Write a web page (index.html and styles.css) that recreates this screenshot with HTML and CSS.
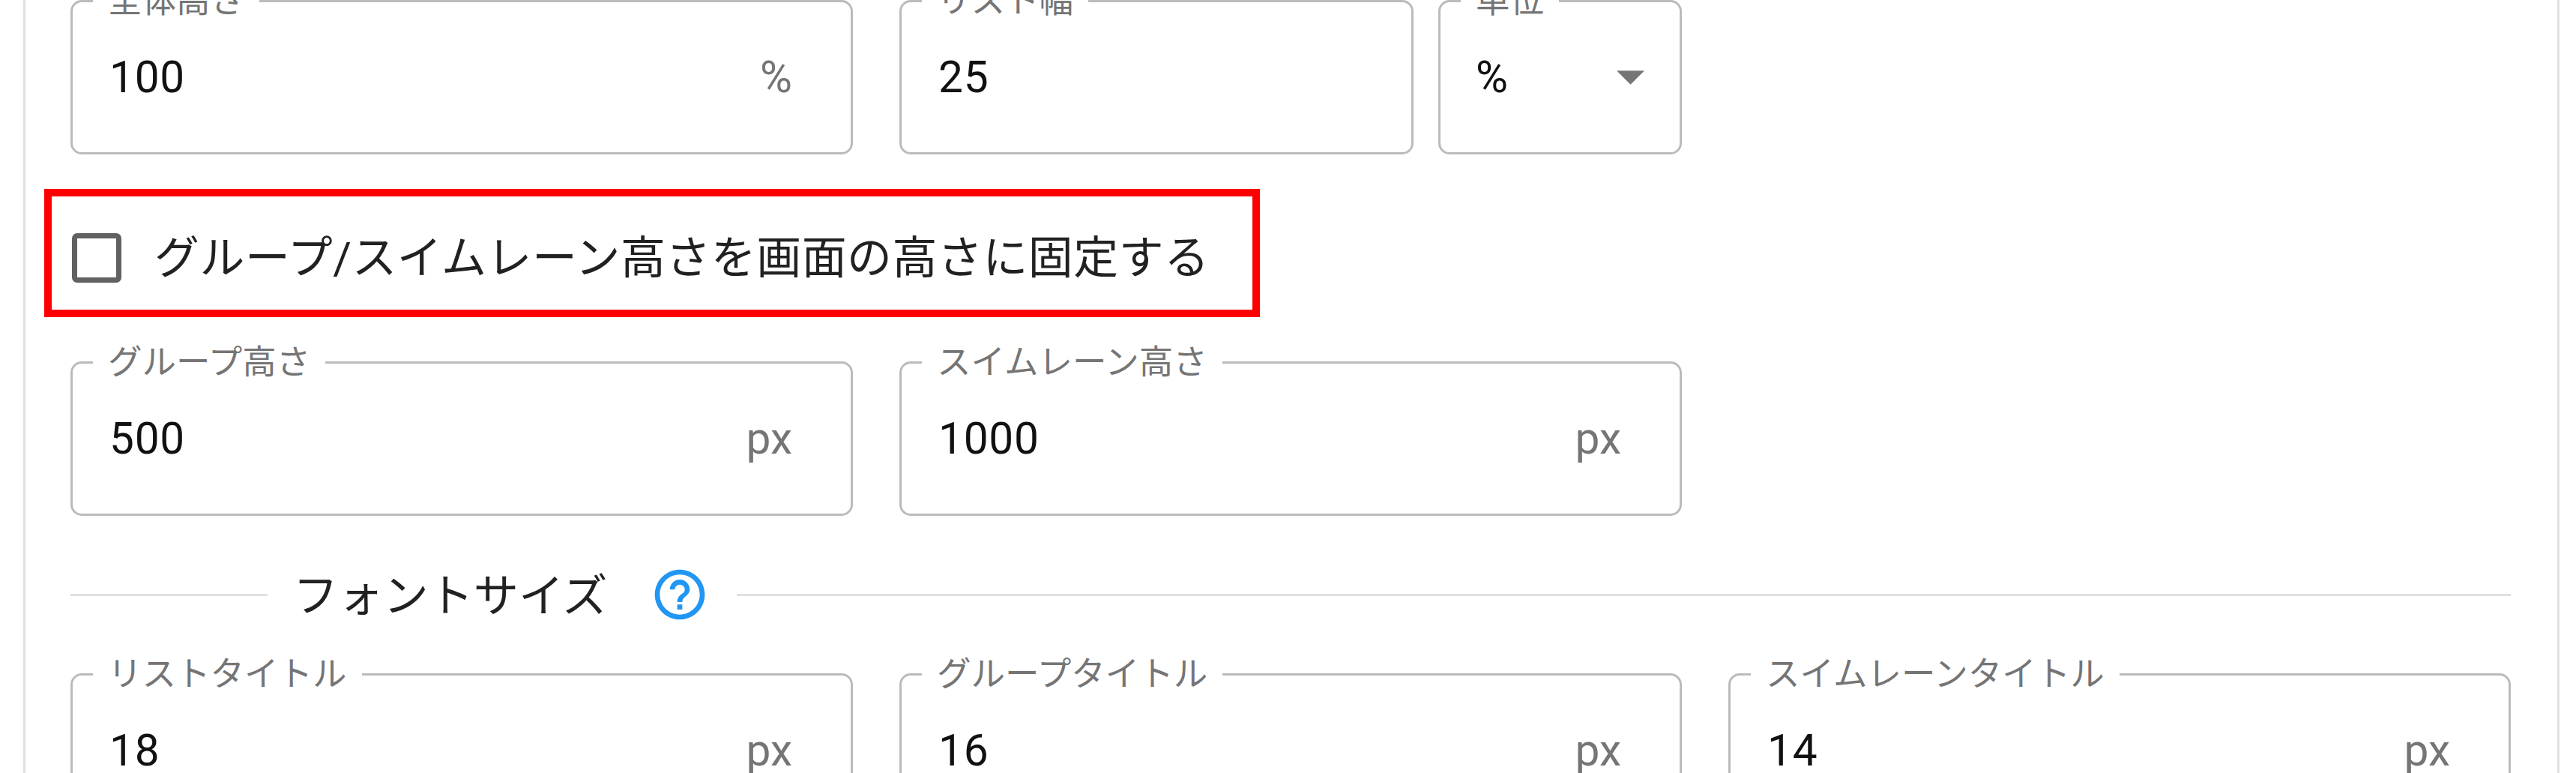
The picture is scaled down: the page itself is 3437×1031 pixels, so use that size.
FILE: index.html
```html
<!DOCTYPE html>
<html lang="ja">
<head>
  <meta charset="UTF-8">
  <title>ボード設定</title>
  <link rel="stylesheet" href="styles.css">
</head>
<body>

  <div class="panel">

    <!-- Board size -->
    <div class="row">
      <div class="field">
        <span class="field-label">全体高さ</span>
        <span class="field-value">100</span>
        <span class="field-unit">%</span>
      </div>
      <div class="field-pair">
        <div class="field field-wide">
          <span class="field-label">リスト幅</span>
          <span class="field-value">25</span>
        </div>
        <div class="field field-select">
          <span class="field-label">単位</span>
          <span class="field-value">%</span>
          <svg class="select-arrow" viewBox="7 10 10 5"><path d="M7 10l5 5 5-5z"/></svg>
        </div>
      </div>
    </div>

    <!-- Highlighted option -->
    <div class="highlight">
      <span class="checkbox"></span>
      <span class="checkbox-text">グループ/スイムレーン高さを画面の高さに固定する</span>
    </div>

    <!-- Group and swimlane heights -->
    <div class="row row-heights">
      <div class="field">
        <span class="field-label">グループ高さ</span>
        <span class="field-value">500</span>
        <span class="field-unit">px</span>
      </div>
      <div class="field">
        <span class="field-label">スイムレーン高さ</span>
        <span class="field-value">1000</span>
        <span class="field-unit">px</span>
      </div>
    </div>

    <!-- Font size section -->
    <div class="section-divider">
      <span class="divider-line divider-short"></span>
      <span class="section-title">フォントサイズ</span>
      <svg class="help-icon" viewBox="0 0 24 24"><path d="M11 18h2v-2h-2v2zm1-16C6.48 2 2 6.48 2 12s4.48 10 10 10 10-4.48 10-10S17.52 2 12 2zm0 18c-4.41 0-8-3.59-8-8s3.59-8 8-8 8 3.59 8 8-3.59 8-8 8zm0-14c-2.21 0-4 1.79-4 4h2c0-1.1.9-2 2-2s2 .9 2 2c0 2-3 1.75-3 5h2c0-2.25 3-2.5 3-5 0-2.21-1.79-4-4-4z"/></svg>
      <span class="divider-line"></span>
    </div>

    <div class="row">
      <div class="field">
        <span class="field-label">リストタイトル</span>
        <span class="field-value">18</span>
        <span class="field-unit">px</span>
      </div>
      <div class="field">
        <span class="field-label">グループタイトル</span>
        <span class="field-value">16</span>
        <span class="field-unit">px</span>
      </div>
      <div class="field">
        <span class="field-label">スイムレーンタイトル</span>
        <span class="field-value">14</span>
        <span class="field-unit">px</span>
      </div>
    </div>

  </div>

</body>
</html>
```

FILE: styles.css
```css
* {
  margin: 0;
  padding: 0;
  box-sizing: border-box;
}

html, body {
  height: 1031px;
  overflow: hidden;
}

body {
  font-family: Roboto, "Noto Sans CJK JP", sans-serif;
  background-color: #ffffff;
  color: #212121;
}

.panel {
  height: 1031px;
  margin: 0 22px 0 31px;
  padding: 0 62px 0 60px;
  border-left: 3px solid #e0e0e0;
  border-right: 3px solid #e0e0e0;
  overflow: hidden;
}

.row {
  display: grid;
  grid-template-columns: repeat(3, 1fr);
  column-gap: 62px;
}

.row-heights {
  margin-top: 59px;
}

.field-pair {
  display: flex;
  gap: 33px;
}

.field {
  position: relative;
  display: flex;
  align-items: center;
  height: 206px;
  padding: 0 78px 0 49px;
  border: 3px solid #bbbbbb;
  border-radius: 15px;
  font-size: 58.6px;
}

.field-wide {
  flex: none;
  width: 686px;
}

.field-select {
  flex: none;
  width: 325px;
  padding-left: 47px;
}

.field-label {
  position: absolute;
  top: -27px;
  left: 27px;
  padding: 0 20px;
  background-color: #ffffff;
  color: #757575;
  font-size: 45.5px;
  line-height: 52px;
  white-space: nowrap;
}

.field-value {
  flex: 1;
  color: #111111;
  letter-spacing: 0.7px;
}

.field-unit {
  color: #757575;
}

.select-arrow {
  position: absolute;
  right: 47px;
  top: 91px;
  width: 37px;
  height: 19px;
  fill: #757575;
}

.highlight {
  display: flex;
  align-items: center;
  gap: 44px;
  width: 1622px;
  height: 171px;
  margin: 46px 0 0 -35px;
  padding: 12px 0 0 27px;
  border: 10px solid #ff0000;
}

.checkbox {
  flex: none;
  width: 66px;
  height: 66px;
  border: 7px solid #616161;
  border-radius: 7px;
}

.checkbox-text {
  margin-bottom: 10px;
  font-size: 59.9px;
  letter-spacing: 0.55px;
  white-space: nowrap;
}

.section-divider {
  display: flex;
  align-items: center;
  height: 80px;
  margin: 65px 0;
}

.divider-line {
  flex: 1;
  height: 3px;
  background-color: #e0e0e0;
}

.divider-short {
  flex: none;
  width: 263px;
}

.section-title {
  margin: 0 0 8px 34px;
  font-size: 60.2px;
  white-space: nowrap;
}

.help-icon {
  width: 80px;
  height: 80px;
  margin: 0 36px 0 56px;
  fill: #2196f3;
}
```
